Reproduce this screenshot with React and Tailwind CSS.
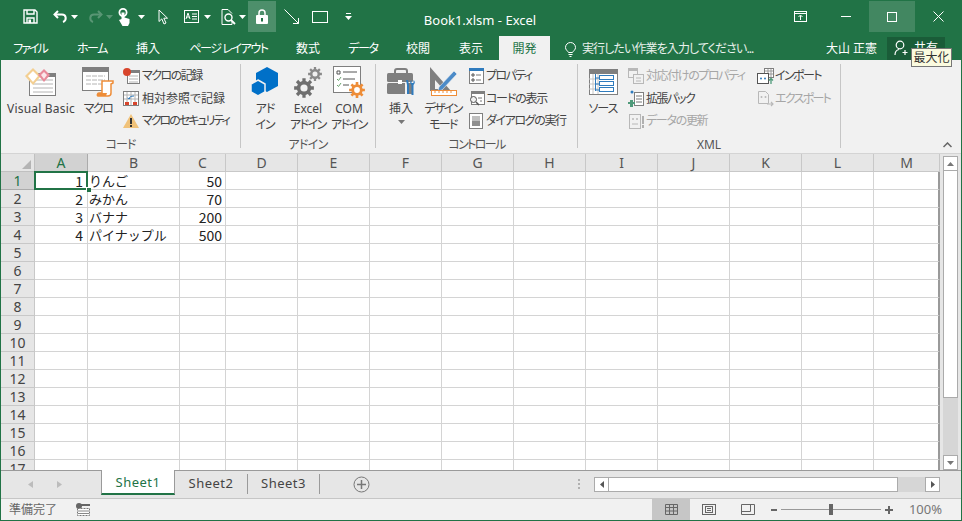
const columns = [
  { name: "A", w: "w-[53px]" },
  { name: "B", w: "w-[92px]" },
  { name: "C", w: "w-[46px]" },
  { name: "D", w: "w-[72px]" },
  { name: "E", w: "w-[72px]" },
  { name: "F", w: "w-[72px]" },
  { name: "G", w: "w-[72px]" },
  { name: "H", w: "w-[72px]" },
  { name: "I", w: "w-[72px]" },
  { name: "J", w: "w-[72px]" },
  { name: "K", w: "w-[72px]" },
  { name: "L", w: "w-[72px]" },
  { name: "M", w: "w-[66px]" },
]

const data = [
  [1, "りんご", 50],
  [2, "みかん", 70],
  [3, "バナナ", 200],
  [4, "パイナップル", 500],
]

const rows = Array.from({ length: 17 }, (_, i) => i + 1)

function gearPoints(cx, cy, r, teeth) {
  const pts = []
  const step = Math.PI / teeth
  for (let i = 0; i < teeth * 2; i++) {
    const outer = i % 2 === 0
    const rad = outer ? r : r * 0.72
    for (const off of [-0.42, 0.42]) {
      const a = i * step + off * step
      const x = Math.round((cx + rad * Math.cos(a)) * 100) / 100
      const y = Math.round((cy + rad * Math.sin(a)) * 100) / 100
      pts.push(x + "," + y)
    }
  }
  return pts.join(" ")
}

function Gear({ cx, cy, r, color, hole = "#f1f1f1", teeth = 8 }) {
  return (
    <>
      <polygon points={gearPoints(cx, cy, r, teeth)} fill={color} />
      <circle cx={cx} cy={cy} r={r * 0.36} fill={hole} />
    </>
  )
}

function Caret({ color = "#fff", opacity = 1 }) {
  return (
    <svg width="7" height="4" viewBox="0 0 7 4" opacity={opacity}>
      <path d="M0 0h7L3.500 4z" fill={color} />
    </svg>
  )
}

function QuickButton({ w, children }) {
  return <div className={`${w} h-[31px] shrink-0 flex items-center justify-center`}>{children}</div>
}

function TitleBar() {
  return (
    <div className="h-[36px] flex items-start pt-px bg-[#217346] text-white">
      <div className="w-[19px]" />
      <QuickButton w="w-[20px]">
        <svg width="15" height="15" viewBox="0 0 15 15" fill="none" stroke="#fff" strokeWidth="1.400">
          <path d="M1 1h11l2 2v11H1z" />
          <path d="M4 1v4h7V1" />
          <path d="M4 14V9h7v5" />
          <rect x="5.500" y="10.500" width="2.500" height="3.500" fill="#fff" stroke="none" />
        </svg>
      </QuickButton>
      <div className="w-[10px]" />
      <QuickButton w="w-[20px]">
        <svg width="15" height="13" viewBox="0 0 15 13" fill="none" stroke="#fff" strokeWidth="2">
          <path d="M5 1L1.500 4.500 5 8" />
          <path d="M2 4.500h7c4.500 0 5 6 1 7.500" />
        </svg>
      </QuickButton>
      <QuickButton w="w-[8px]"><Caret /></QuickButton>
      <div className="w-[7px]" />
      <QuickButton w="w-[20px]">
        <svg width="15" height="13" viewBox="0 0 15 13" fill="none" stroke="#fff" strokeWidth="2" opacity="0.25">
          <path d="M10 1l3.500 3.500L10 8" />
          <path d="M13 4.500H6c-4.500 0-5 6-1 7.500" />
        </svg>
      </QuickButton>
      <QuickButton w="w-[8px]"><Caret opacity={0.25} /></QuickButton>
      <QuickButton w="w-[22px]">
        <svg width="13" height="18" viewBox="0 0 13 18">
          <circle cx="5" cy="4.500" r="3.600" fill="none" stroke="#fff" strokeWidth="1.800" />
          <path d="M3.500 4.500h3v5l5 1.500v4l-1.500 3H4.500L1 12l2.500-1z" fill="#fff" />
        </svg>
      </QuickButton>
      <QuickButton w="w-[12px]"><Caret /></QuickButton>
      <QuickButton w="w-[32px]">
        <svg width="10" height="16" viewBox="0 0 10 16" fill="none" stroke="#fff" strokeWidth="1">
          <path d="M1 1v11.500l2.800-2.600L6 15l2-1-2.200-4.800H9.500z" />
        </svg>
      </QuickButton>
      <QuickButton w="w-[24px]">
        <svg width="15" height="13" viewBox="0 0 15 13" fill="none" stroke="#fff">
          <rect x="0.500" y="0.500" width="14" height="12" />
          <path d="M2 9l2-6 2 6M2.800 7h2.400" />
          <path d="M8 4h5M8 6.500h5M8 9h5" />
        </svg>
      </QuickButton>
      <QuickButton w="w-[8px]"><Caret /></QuickButton>
      <div className="w-[9px]" />
      <QuickButton w="w-[16px]">
        <svg width="15" height="16" viewBox="0 0 15 16" fill="none" stroke="#fff">
          <path d="M7 0.500H1v15h10v-3" />
          <path d="M7 0.500l4 4" />
          <circle cx="7.500" cy="8.500" r="3.500" strokeWidth="1.400" />
          <path d="M10 11l4 4" strokeWidth="1.800" />
        </svg>
      </QuickButton>
      <QuickButton w="w-[12px]"><Caret /></QuickButton>
      <QuickButton w="w-[28px] bg-white/20">
        <svg width="12" height="15" viewBox="0 0 12 15">
          <path d="M3 7V4a3 3 0 0 1 6 0v3" fill="none" stroke="#fff" strokeWidth="1.500" />
          <rect x="0" y="6" width="12" height="9" rx="1" fill="#fff" />
          <path d="M5 9h2v3.500H5z" fill="#217346" />
        </svg>
      </QuickButton>
      <QuickButton w="w-[28px] pl-[2px]">
        <svg width="15" height="15" viewBox="0 0 15 15" fill="none" stroke="#fff">
          <path d="M0.500 0.500l14 14M14.500 9v5.500H9" />
        </svg>
      </QuickButton>
      <QuickButton w="w-[32px]">
        <svg width="16" height="12" viewBox="0 0 16 12" fill="none" stroke="#fff">
          <rect x="0.500" y="0.500" width="15" height="11" />
        </svg>
      </QuickButton>
      <QuickButton w="w-[24px]">
        <svg width="7" height="7" viewBox="0 0 7 7">
          <path d="M1 0h5v1H1zM0 3h7L3.500 7z" fill="#fff" />
        </svg>
      </QuickButton>
      <div className="w-[240px] pt-[10px] text-center text-[13px] leading-[18px]">Book1.xlsm - Excel</div>
      <div className="flex-1" />
      <QuickButton w="w-[46px]">
        <svg width="13" height="11" viewBox="0 0 13 11" fill="none" stroke="#fff">
          <rect x="0.500" y="0.500" width="12" height="10" />
          <path d="M0.500 2.500h12M6.500 9V4.500M4.500 6l2-2 2 2" />
        </svg>
      </QuickButton>
      <QuickButton w="w-[46px]">
        <div className="w-[10px] h-px bg-white" />
      </QuickButton>
      <QuickButton w="w-[46px] bg-white/15">
        <div className="w-[10px] h-[10px] border border-white" />
      </QuickButton>
      <QuickButton w="w-[46px]">
        <svg width="11" height="11" viewBox="0 0 11 11" stroke="#fff">
          <path d="M0.500 0.500l10 10M10.500 0.500l-10 10" />
        </svg>
      </QuickButton>
    </div>
  )
}

function TabBar() {
  return (
    <div className="relative h-[24px] pt-[2px] flex items-center bg-[#217346] text-white text-[12px]">
      <div className="w-[58px] text-center tracking-[-2px]">ファイル</div>
      <div className="w-[66px] text-center tracking-[-1.500px]">ホーム</div>
      <div className="w-[46px] text-center">挿入</div>
      <div className="w-[115px] text-center tracking-[-1.400px]">ページ レイアウト</div>
      <div className="w-[44px] text-center">数式</div>
      <div className="w-[66px] text-center tracking-[-1.300px]">データ</div>
      <div className="w-[44px] text-center">校閲</div>
      <div className="w-[59px] pl-[19px]">表示</div>
      <div className="w-[51px] h-[24px] -mt-[2px] pt-[2px] flex items-center justify-center bg-[#f1f1f1] text-[#217346]">開発</div>
      <svg className="ml-[15px]" width="11" height="15" viewBox="0 0 11 15" fill="none" stroke="#fff">
        <path d="M3.500 10.500C2.500 8.500 0.500 8 0.500 5.500a5 5 0 0 1 10 0c0 2.500-2 3-3 5z" />
        <path d="M3.500 12.500h4M4.500 14.500h2" />
      </svg>
      <div className="ml-[6px] text-[#e8f0eb] tracking-[-0.900px]">実行したい作業を入力してください...</div>
      <div className="flex-1" />
      <div className="mr-[10px]">大山 正憲</div>
      <div className="w-[58px] h-[23px] -mt-[2px] flex items-center pl-[7px] gap-[4px] bg-[#1a5c38] mr-[16px]">
        <svg width="16" height="16" viewBox="0 0 16 16" fill="none" stroke="#fff" strokeWidth="1.200">
          <circle cx="6" cy="5" r="3.800" />
          <path d="M1 15c0-3 1.500-5 4-5.500M11 10v5M8.500 12.500h5" />
        </svg>
        <span>共有</span>
      </div>
      {/* tooltip over the share button */}
      <div className="absolute left-[910px] top-[12px] w-[41px] h-[19px] border border-[#767676] bg-[#fbfbdf] text-[#333] text-[12px] leading-[17px] text-center">最大化</div>
    </div>
  )
}

function BigButton({ w, icon, label, extra }) {
  return (
    <div className={`${w} flex flex-col items-center shrink-0`}>
      <div className="h-[36px] flex items-center justify-center">{icon}</div>
      <div className="mt-px leading-[16px] text-center whitespace-nowrap">{label}</div>
      {extra}
    </div>
  )
}

function Line({ t, children }) {
  return <div className={t}>{children}</div>
}

function SmallButton({ icon, label, disabled, t = "", g = "gap-[3px]" }) {
  return (
    <div className={`h-[22.500px] flex items-center ${g} whitespace-nowrap ${disabled ? "text-[#a6a6a6]" : ""}`}>
      <div className="w-[16px] h-[16px] shrink-0 flex items-center justify-center">{icon}</div>
      <span className={t}>{label}</span>
    </div>
  )
}

function Group({ w, label, t = "", children }) {
  return (
    <div className={`${w} h-[84px] border-r border-[#c6c6c6] shrink-0`}>
      <div className="h-[72px] flex">{children}</div>
      <div className={`h-[12px] leading-[18px] text-center text-[#555] ${t}`}>{label}</div>
    </div>
  )
}

function VbIcon() {
  return (
    <svg width="32" height="28" viewBox="0 0 32 28">
      <rect x="4.500" y="5.500" width="26" height="22" fill="#fff" stroke="#7f7f7f" />
      <rect x="4" y="5" width="27" height="4" fill="#7f7f7f" />
      <path d="M8 12h20M8 16h20M8 20h20M8 24h20" stroke="#b4b4b4" />
      <path d="M8 0l8 8-8 9-8-9z" fill="#f3cf92" />
      <path d="M8 3l5 5-5 6-5-6z" fill="#fff" />
      <path d="M19 1l6 6-6 7-6-7z" fill="#e88a9a" />
      <path d="M19 4l3 3-3 4-3-4z" fill="#fbe6ea" />
    </svg>
  )
}

function MacroIcon() {
  return (
    <svg width="32" height="30" viewBox="0 0 32 30">
      <rect x="0.500" y="0.500" width="26" height="23" fill="#fff" stroke="#7f7f7f" />
      <rect x="0" y="0" width="27" height="5" fill="#7f7f7f" />
      <path d="M4 9h19M4 13h19M4 17h19" stroke="#b4b4b4" strokeDasharray="5 1" />
      <path d="M20 14h11v2l-2 1v9c0 2-1 3-3 3H16c-1 0-1-3 1-3h3z" fill="#fff" stroke="#ee8d38" strokeWidth="1.500" />
      <path d="M16 26h9l-1 3h-8z" fill="#ee8d38" />
    </svg>
  )
}

function HexIcon() {
  return (
    <svg width="28" height="30" viewBox="0 0 28 30">
      <path d="M16 0l11 6v13l-11 6-11-6V6z" fill="#0070c8" />
      <path d="M7 13l7 4v8l-7 4-7-4v-8z" fill="#0070c8" stroke="#f1f1f1" strokeWidth="1.500" />
    </svg>
  )
}

function GearsIcon() {
  return (
    <svg width="28" height="31" viewBox="0 0 28 31">
      <Gear cx={10} cy={21} r={10} color="#6f6f6f" />
      <Gear cx={21} cy={7} r={7} color="#8a8a8a" />
    </svg>
  )
}

function ComIcon() {
  return (
    <svg width="32" height="32" viewBox="0 0 32 32">
      <rect x="0.500" y="0.500" width="27" height="26" fill="#fff" stroke="#7f7f7f" />
      <path d="M10 6h14M10 13h12M10 19h6" stroke="#555" />
      <path d="M4 5h3v3H4z" fill="none" stroke="#555" />
      <path d="M4 13l1.500 1.500L8 11M4 19l1.500 1.500L8 17" fill="none" stroke="#6aa56e" />
      <Gear cx={24} cy={24} r={8} color="#ee8d38" hole="#fff" />
    </svg>
  )
}

function ToolboxIcon() {
  return (
    <svg width="29" height="28" viewBox="0 0 29 28">
      <path d="M8 6V3c0-1 1-2 2-2h8c1 0 2 1 2 2v3" fill="none" stroke="#7f7f7f" strokeWidth="2" />
      <rect x="0" y="5" width="26" height="9" rx="1.500" fill="#7f7f7f" />
      <rect x="0" y="15" width="26" height="11" rx="1.500" fill="#7f7f7f" />
      <rect x="11" y="12" width="4" height="4" fill="#fff" />
      <path d="M18 14h3v14h-3z" fill="#f1f1f1" />
      <path d="M19 12h2l1 5v9h-2v-9zM24.500 12v3h2v-3c1.500 1 2 3 0 5v10h-2V17c-2-2-1.500-4 0-5z" fill="#2f7bbd" />
    </svg>
  )
}

function DesignIcon() {
  return (
    <svg width="30" height="30" viewBox="0 0 30 30">
      <path d="M2 0l21 24H2z" fill="#7f7f7f" />
      <path d="M7 13l8 9H7z" fill="#f1f1f1" />
      <path d="M11 20L26 4l3 3-15 16-4 1z" fill="#4c8bc8" stroke="#f1f1f1" strokeWidth="0.600" />
      <rect x="3.500" y="23.500" width="25" height="5" fill="#fff" stroke="#ee8d38" />
      <path d="M7 24v2M11 24v2M15 24v2M19 24v2M23 24v2" stroke="#ee8d38" />
    </svg>
  )
}

function SourceIcon() {
  return (
    <svg width="29" height="26" viewBox="0 0 29 26">
      <rect x="0.500" y="0.500" width="28" height="25" fill="#fff" stroke="#7f7f7f" />
      <rect x="0" y="0" width="29" height="5" fill="#7f7f7f" />
      <path d="M4 5v20M9 5v20M0 10h9M0 15h9M0 20h9" stroke="#c4c4c4" />
      <path d="M6.500 5v17M6.500 9h4M6.500 15h4M6.500 21h4" stroke="#2f7bbd" fill="none" />
      <rect x="10.500" y="6.500" width="14" height="4" fill="#fff" stroke="#2f7bbd" />
      <rect x="10.500" y="12.500" width="14" height="4" fill="#fff" stroke="#2f7bbd" />
      <rect x="10.500" y="18.500" width="14" height="4" fill="#fff" stroke="#2f7bbd" />
    </svg>
  )
}

function SheetSmall({ stroke = "#7f7f7f" }) {
  return (
    <>
      <rect x="4.500" y="2.500" width="12" height="13" fill="#fff" stroke={stroke} />
      <rect x="4" y="2" width="13" height="3" fill={stroke} />
      <path d="M6 8h9M6 11h9M6 14h9" stroke="#b4b4b4" />
    </>
  )
}

function Small({ children, w = 17, h = 17 }) {
  return (
    <svg width={w} height={h} viewBox="0 0 17 17" className="shrink-0">
      {children}
    </svg>
  )
}

function Ribbon() {
  const addin = <Line t="tracking-[-1.500px]">アドイン</Line>
  return (
    <div className="h-[94px] pt-[4px] flex bg-[#f1f1f1] text-[#444] text-[12px] border-b border-[#d4d4d4]">
      <Group w="w-[240px]" label="コード" t="tracking-[-1px]">
        <div className="w-[2px] shrink-0" />
        <BigButton w="w-[76px]" icon={<VbIcon />} label={<Line t="tracking-[0.200px]">Visual Basic</Line>} />
        <BigButton w="w-[38px]" icon={<MacroIcon />} label={<Line t="tracking-[-1.500px]">マクロ</Line>} />
        <div className="ml-[6px] pt-px">
          <SmallButton label="マクロの記録" t="tracking-[-1.500px]" icon={
            <Small>
              <SheetSmall />
              <circle cx="4" cy="4" r="4" fill="#d8452c" />
            </Small>
          } />
          <SmallButton label="相対参照で記録" icon={
            <Small>
              <rect x="0.500" y="1.500" width="15" height="14" fill="#fff" stroke="#7f7f7f" />
              <path d="M4 2v13M8 2v13M12 2v13M1 5h14M1 9h14" stroke="#b4b4b4" />
              <path d="M11 6c-3 0-5 1-5 3l-1.500-1M6 9l1.500-1" fill="none" stroke="#2f7bbd" />
              <rect x="2" y="12" width="4" height="3" fill="#d8452c" />
              <rect x="10" y="12" width="4" height="3" fill="#d8452c" />
            </Small>
          } />
          <SmallButton label="マクロのセキュリティ" t="tracking-[-2px]" icon={
            <Small>
              <path d="M8 1l8 14H0z" fill="#f0c27a" />
              <path d="M7 5h2v6H7zM7 12h2v2H7z" fill="#333" />
            </Small>
          } />
        </div>
      </Group>
      <Group w="w-[135px]" label="アドイン" t="tracking-[-0.700px]">
        <div className="w-[4px] shrink-0" />
        <BigButton w="w-[40px]" icon={<HexIcon />} label={<Line t="tracking-[-1px]">アド<br />イン</Line>} />
        <div className="w-[2px] shrink-0" />
        <BigButton w="w-[42px]" icon={<GearsIcon />} label={<>Excel{addin}</>} />
        <BigButton w="w-[40px]" icon={<ComIcon />} label={<>COM{addin}</>} />
      </Group>
      <Group w="w-[202px]" label="コントロール" t="tracking-[-1.600px]">
        <div className="w-[7px] shrink-0" />
        <BigButton w="w-[36px]" icon={<ToolboxIcon />} label="挿入" extra={
          <div className="mt-[3px] flex"><Caret color="#777" /></div>
        } />
        <div className="w-px shrink-0" />
        <BigButton w="w-[46px]" icon={<DesignIcon />} label={<Line t="tracking-[-1.700px]">デザイン<br />モード</Line>} />
        <div className="ml-[3px] pt-px">
          <SmallButton label="プロパティ" g="gap-[1px]" t="tracking-[-1.600px]" icon={
            <Small>
              <rect x="0.500" y="0.500" width="14" height="15" fill="#fff" stroke="#7f7f7f" />
              <rect x="0" y="0" width="15" height="3" fill="#2f7bbd" />
              <path d="M3 6h2v2H3zM3 11h2v2H3z" fill="none" stroke="#555" />
              <path d="M7 7h5M7 12h5" stroke="#777" />
            </Small>
          } />
          <SmallButton label="コードの表示" g="gap-[1px]" t="tracking-[-1.200px]" icon={
            <Small>
              <rect x="2.500" y="1.500" width="13" height="13" fill="#fff" stroke="#7f7f7f" />
              <rect x="2" y="1" width="14" height="3" fill="#7f7f7f" />
              <circle cx="4.500" cy="9.500" r="3" fill="#f1f1f1" stroke="#555" />
              <path d="M7 12l3 3" stroke="#555" strokeWidth="1.500" />
              <path d="M9 8h4M11 11h2" stroke="#777" />
            </Small>
          } />
          <SmallButton label="ダイアログの実行" g="gap-[1px]" t="tracking-[-1.400px]" icon={
            <Small>
              <rect x="0.500" y="0.500" width="13" height="15" fill="#fff" stroke="#7f7f7f" />
              <rect x="3" y="3" width="8" height="5" fill="#bfbfbf" />
              <rect x="3" y="8" width="8" height="5" fill="#8f8f8f" />
            </Small>
          } />
        </div>
      </Group>
      <Group w="w-[263px]" label="XML">
        <div className="w-[6px] shrink-0" />
        <BigButton w="w-[38px]" icon={<SourceIcon />} label={<Line t="tracking-[-1px]">ソース</Line>} />
        <div className="ml-[6px] w-[129px] shrink-0 pt-px">
          <SmallButton disabled label="対応付けのプロパティ" g="gap-[2px]" t="tracking-[-1.400px]" icon={
            <Small>
              <rect x="0.500" y="0.500" width="9" height="9" fill="#f1f1f1" stroke="#b8b8b8" />
              <rect x="0" y="0" width="10" height="3" fill="#b8b8b8" />
              <rect x="5.500" y="6.500" width="10" height="9" fill="#f1f1f1" stroke="#b8b8b8" />
              <path d="M8 10h5M8 13h5" stroke="#b8b8b8" />
            </Small>
          } />
          <SmallButton label="拡張パック" g="gap-[2px]" t="tracking-[-1.400px]" icon={
            <Small>
              <rect x="6.500" y="2.500" width="9" height="13" fill="#fff" stroke="#7f7f7f" />
              <path d="M8 6h6M8 9h6M8 12h6" stroke="#777" />
              <circle cx="4" cy="2" r="1.500" fill="#2f7bbd" />
              <path d="M2 10h3v2h2v2H5v3H2v-3H0v-2h2z" fill="#4f9a7a" />
            </Small>
          } />
          <SmallButton disabled label="データの更新" g="gap-[2px]" t="tracking-[-1.300px]" icon={
            <Small>
              <rect x="1.500" y="1.500" width="11" height="14" fill="#f1f1f1" stroke="#b8b8b8" />
              <circle cx="5" cy="6" r="1" fill="#b8b8b8" />
              <circle cx="9" cy="6" r="1" fill="#b8b8b8" />
              <path d="M4 11h6" stroke="#b8b8b8" />
              <path d="M14 3h2v8h-2zM14 12h2v3h-2z" fill="#b0b0b0" />
            </Small>
          } />
        </div>
        <div className="pt-px">
          <SmallButton label="インポート" g="gap-[2px]" t="tracking-[-1.600px]" icon={
            <Small>
              <rect x="7.500" y="0.500" width="9" height="9" fill="#fff" stroke="#7f7f7f" />
              <path d="M8 3h8M8 6h8M11 1v8M14 1v8" stroke="#999" />
              <rect x="0.500" y="5.500" width="11" height="10" fill="#fff" stroke="#555" />
              <circle cx="4" cy="10.500" r="1" fill="#2f7bbd" />
              <circle cx="8" cy="10.500" r="1" fill="#2f7bbd" />
              <path d="M14 16v-5M12 12.500l2-2 2 2" fill="none" stroke="#4f9a7a" strokeWidth="1.300" />
            </Small>
          } />
          <SmallButton disabled label="エクスポート" g="gap-[2px]" t="tracking-[-1.700px]" icon={
            <Small>
              <path d="M1.500 1.500h7l3 3v9h-10z" fill="#f1f1f1" stroke="#b8b8b8" />
              <circle cx="4.500" cy="7" r="1" fill="#b8b8b8" />
              <circle cx="8.500" cy="7" r="1" fill="#b8b8b8" />
              <path d="M10 14h6M14 12l2 2-2 2" fill="none" stroke="#b8b8b8" strokeWidth="1.200" />
            </Small>
          } />
        </div>
      </Group>
      <div className="flex-1 h-[84px] flex items-end justify-end pr-[9px]">
        <svg width="9" height="6" viewBox="0 0 9 6" fill="none" stroke="#666" strokeWidth="1.500">
          <path d="M0.500 5l4-4 4 4" />
        </svg>
      </div>
    </div>
  )
}

function Sheet() {
  return (
    <div className="h-[316px] flex bg-[#e6e6e6] overflow-hidden">
      <div className="flex-1 overflow-hidden">
        <div className="h-[18px] flex text-[14px] text-[#555]">
          <div className="w-[34px] h-full pr-[3px] pb-[2px] flex items-end justify-end border-r border-b border-[#c0c0c0]">
            <svg width="9" height="9" viewBox="0 0 9 9"><path d="M9 0v9H0z" fill="#b4b4b4" /></svg>
          </div>
          {columns.map((c, i) => (
            <div
              key={c.name}
              className={`${c.w} h-full leading-[18px] text-center border-r border-b ${i === 0 ? "bg-[#d2d2d2] text-[#217346] border-[#ababab]" : "border-[#c8c8c8]"}`}
            >
              {c.name}
            </div>
          ))}
        </div>
        {rows.map((r) => {
          const row = data[r - 1]
          return (
            <div key={r} className="h-[18px] flex bg-white">
              <div className={`w-[34px] h-full leading-[17px] text-center text-[14px] border-r border-b ${r === 1 ? "bg-[#d2d2d2] text-[#217346] border-[#ababab]" : "bg-[#e6e6e6] text-[#444] border-[#c8c8c8]"}`}>
                {r}
              </div>
              {columns.map((c, i) => (
                <div
                  key={c.name}
                  className={`relative ${c.w} h-full leading-[18px] border-b ${i === 12 ? "border-r-2 border-r-[#9a9a9a]" : "border-r"} border-[#d4d4d4] text-[#222] [font-family:'Noto_Sans_CJK_JP',sans-serif] [font-feature-settings:normal] whitespace-nowrap`}
                >
                  {row && i === 0 && <div className="text-right pr-[4px] text-[14px]">{row[0]}</div>}
                  {row && i === 1 && <div className="pl-[1px] text-[13px]">{row[1]}</div>}
                  {row && i === 2 && <div className="text-right pr-[3px] text-[14px]">{row[2]}</div>}
                  {r === 1 && i === 0 && (
                    <>
                      <div className="absolute left-[-1px] top-[-1px] w-[54px] h-[19px] border-2 border-[#217346]" />
                      <div className="absolute left-[51px] top-[15px] w-[5px] h-[5px] bg-[#217346] border-l border-t border-white z-10" />
                    </>
                  )}
                </div>
              ))}
            </div>
          )
        })}
      </div>
      <div className="w-[21px] pl-[3px] pt-[2px] flex flex-col">
        <div className="w-[15px] h-[15px] flex items-center justify-center bg-white border border-[#ababab]">
          <svg width="7" height="4" viewBox="0 0 7 4"><path d="M0 4h7L3.500 0z" fill="#777" /></svg>
        </div>
        <div className="w-[15px] h-[227px] bg-white border border-[#ababab] border-t-0" />
        <div className="w-[15px] flex-1 bg-[#d6d6d6]" />
        <div className="w-[15px] h-[15px] flex items-center justify-center bg-white border border-[#ababab]">
          <Caret color="#777" />
        </div>
      </div>
    </div>
  )
}

function SheetTabs() {
  return (
    <div className="h-[28px] flex bg-[#e6e6e6] border-t border-[#9a9a9a] text-[13px] tracking-[0.5px] text-[#444]">
      <div className="w-[100px] flex items-center">
        <svg className="ml-[27px]" width="5" height="7" viewBox="0 0 5 7"><path d="M5 0v7L0 3.500z" fill="#bcbcbc" /></svg>
        <svg className="ml-[24px]" width="5" height="7" viewBox="0 0 5 7"><path d="M0 0v7l5-3.500z" fill="#bcbcbc" /></svg>
      </div>
      <div className="w-[74px] h-[25px] -mt-px pt-[3px] flex items-center justify-center bg-white border-x border-[#9a9a9a] border-b-2 border-b-[#217346] text-[#217346]">Sheet1</div>
      <div className="w-[73px] h-[20px] mt-[3px] flex items-center justify-center border-r border-[#9a9a9a]">Sheet2</div>
      <div className="w-[72px] h-[20px] mt-[3px] flex items-center justify-center border-r border-[#9a9a9a]">Sheet3</div>
      <div className="ml-[33px] flex items-center">
        <svg width="17" height="17" viewBox="0 0 17 17" fill="none" stroke="#777">
          <circle cx="8.500" cy="8.500" r="7.500" />
          <path d="M8.500 4v9M4 8.500h9" strokeWidth="1.500" />
        </svg>
      </div>
      <div className="flex-1" />
      <div className="flex flex-col gap-[2px] justify-center mr-[14px] pb-[2px]">
        <div className="w-[2px] h-[2px] bg-[#b0b0b0]" />
        <div className="w-[2px] h-[2px] bg-[#b0b0b0]" />
        <div className="w-[2px] h-[2px] bg-[#b0b0b0]" />
      </div>
      <div className="w-[346px] h-[15px] mt-[6px] mr-[21px] flex">
        <div className="w-[15px] h-full flex items-center justify-center bg-white border border-[#ababab]">
          <svg width="4" height="7" viewBox="0 0 4 7"><path d="M4 0v7L0 3.500z" fill="#555" /></svg>
        </div>
        <div className="w-[289px] h-full bg-white border-y border-r border-[#ababab]" />
        <div className="flex-1 h-full bg-[#d6d6d6]" />
        <div className="w-[15px] h-full flex items-center justify-center bg-white border border-[#ababab]">
          <svg width="4" height="7" viewBox="0 0 4 7"><path d="M0 0v7l4-3.500z" fill="#555" /></svg>
        </div>
      </div>
    </div>
  )
}

function StatusBar() {
  return (
    <div className="h-[22px] flex items-center bg-[#f1f1f1] border-t border-[#c6c6c6] text-[12px] text-[#666]">
      <div className="ml-[8px] w-[67px]">準備完了</div>
      <svg width="14" height="13" viewBox="0 0 14 13">
        <circle cx="3" cy="3" r="3" fill="#666" />
        <rect x="4" y="1" width="10" height="2" fill="#666" />
        <rect x="1.500" y="5.500" width="12" height="7" fill="#fff" stroke="#777" strokeDasharray="2 1" />
        <path d="M2 8h11M2 10.500h11" stroke="#888" />
      </svg>
      <div className="flex-1" />
      <div className="w-[38px] h-full flex items-center justify-center bg-[#c6c6c6]">
        <svg width="13" height="11" viewBox="0 0 13 11" fill="none" stroke="#666">
          <path d="M0.500 0.500h12v10H0.500zM4.500 0.500v10M8.500 0.500v10M0.500 3.500h12M0.500 7h12" />
        </svg>
      </div>
      <div className="w-[38px] flex justify-center">
        <svg width="14" height="11" viewBox="0 0 14 11" fill="none" stroke="#666">
          <rect x="0.500" y="0.500" width="13" height="10" />
          <rect x="3.500" y="2.500" width="7" height="6" />
          <path d="M5 4.500h4M5 6.500h4" />
        </svg>
      </div>
      <div className="w-[39px] flex justify-center">
        <svg width="14" height="11" viewBox="0 0 14 11" fill="none" stroke="#666">
          <path d="M0.500 0.500h13v10H0.500zM0.500 7.500h9v-7" />
        </svg>
      </div>
      <div className="w-[6px] h-[2px] ml-[4px] bg-[#666]" />
      <div className="relative w-[100px] h-px ml-[4px] bg-[#999]">
        <div className="absolute left-[48px] -top-[5px] w-[4px] h-[11px] bg-[#666]" />
      </div>
      <svg className="ml-[4px]" width="8" height="8" viewBox="0 0 8 8"><path d="M3 0h2v3h3v2H5v3H3V5H0V3h3z" fill="#666" /></svg>
      <div className="w-[49px] mr-[19px] text-right text-[#777] text-[13px]">100%</div>
    </div>
  )
}

export default function App() {
  return (
    <div className="w-[962px] h-[521px] overflow-hidden flex flex-col border-x border-b border-[#217346] [font-family:'Noto_Sans','Noto_Sans_CJK_JP',sans-serif] [font-feature-settings:'palt']">
      <TitleBar />
      <TabBar />
      <Ribbon />
      <Sheet />
      <SheetTabs />
      <StatusBar />
    </div>
  )
}
